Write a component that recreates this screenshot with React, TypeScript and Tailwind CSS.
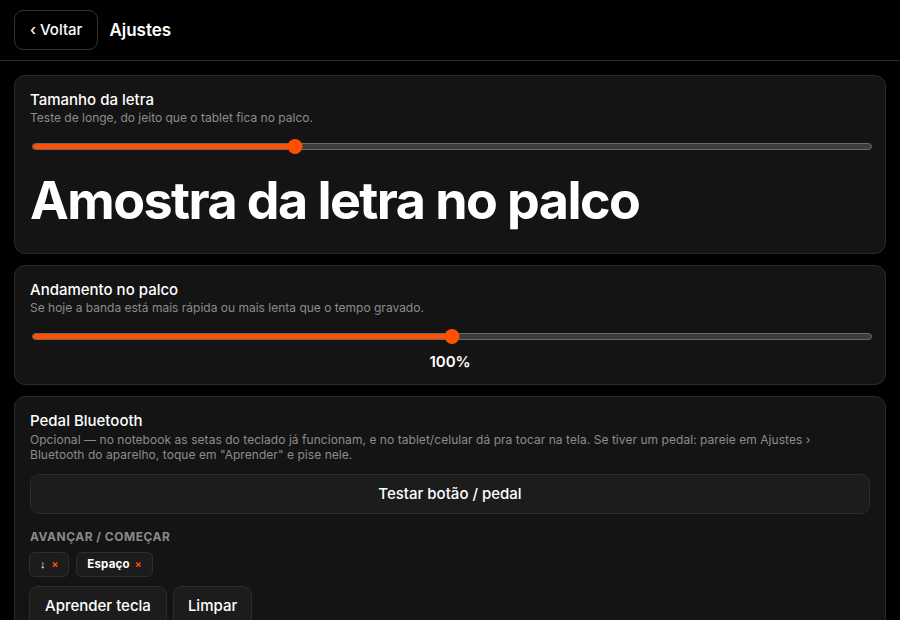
import React from "react";

function Slider({ pct }: { pct: number }) {
  return (
    <div className="relative h-[16px] ml-[2px] mr-[-2px] flex items-center">
      <div className="w-full h-[7px] rounded-full bg-[#3d3d3d] border border-[#6a6a6a] overflow-hidden">
        <div className="h-full bg-[#ff4f00]" style={{ width: `${pct}%` }} />
      </div>
      <div
        className="absolute top-[1px] w-[15px] h-[15px] rounded-full bg-[#ff4f00] -translate-x-1/2"
        style={{ left: `${pct}%` }}
      />
    </div>
  );
}

export default function App() {
  return (
    <div
      className="w-[900px] h-[620px] overflow-hidden bg-black text-white"
      style={{ fontFamily: "Inter, 'Noto Sans', sans-serif" }}
    >
      <header className="h-[61px] border-b border-[#2e2e2e] flex items-center px-[14px] gap-[11px]">
        <button className="h-[40px] px-[15px] rounded-[9px] border border-[#333] text-[15px] font-medium pt-[1px]">
          ‹ Voltar
        </button>
        <h1 className="text-[17px] font-semibold pt-[2px]">Ajustes</h1>
      </header>
      <main className="px-[14px] pt-[14px] flex flex-col gap-[11px]">
        <section className="rounded-[11px] bg-[#141414] border border-[#2a2a2a] px-[15px] pt-[14px] pb-[21px]">
          <h2 className="text-[15px] font-medium leading-[20px]">Tamanho da letra</h2>
          <p className="text-[12px] text-[#8c8c8c] leading-[16px]">Teste de longe, do jeito que o tablet fica no palco.</p>
          <div className="mt-[12px]">
            <Slider pct={31.3} />
          </div>
          <div className="text-[52px] font-bold leading-[62px] mt-[16px] tracking-[-0.03em]">Amostra da letra no palco</div>
        </section>
        <section className="rounded-[11px] bg-[#141414] border border-[#2a2a2a] px-[15px] pt-[14px] pb-[12px]">
          <h2 className="text-[15px] font-medium leading-[20px]">Andamento no palco</h2>
          <p className="text-[12px] text-[#8c8c8c] leading-[16px]">Se hoje a banda está mais rápida ou mais lenta que o tempo gravado.</p>
          <div className="mt-[12px]">
            <Slider pct={50} />
          </div>
          <div className="text-center text-[15px] font-semibold mt-[8px] leading-[20px]">100%</div>
        </section>
        <section className="rounded-[11px] bg-[#141414] border border-[#2a2a2a] px-[15px] pt-[14px] pb-[20px]">
          <h2 className="text-[15px] font-medium leading-[20px]">Pedal Bluetooth</h2>
          <p className="text-[12px] text-[#8c8c8c] leading-[15px] mt-[1px] max-w-[800px] tracking-[0.05px]">
            Opcional — no notebook as setas do teclado já funcionam, e no tablet/celular dá pra tocar na tela. Se tiver um pedal: pareie em Ajustes › Bluetooth do aparelho, toque em "Aprender" e pise nele.
          </p>
          <button className="mt-[12px] w-full h-[40px] rounded-[9px] bg-[#1c1c1c] border border-[#2c2c2c] text-[15px] font-medium">
            Testar botão / pedal
          </button>
          <div className="mt-[15px] text-[12px] font-bold text-[#8a8a8a] tracking-[0.5px] leading-[16px]">AVANÇAR / COMEÇAR</div>
          <div className="mt-[7px] flex gap-[7px] -ml-[1px]">
            <span className="h-[25px] pl-[10px] pr-[10px] rounded-[6px] bg-[#1c1c1c] border border-[#2e2e2e] text-[11px] font-bold flex items-center gap-[6px]">
              <span style={{ fontFamily: "'Liberation Sans', sans-serif" }} className="font-normal text-[11px]">↓</span>
              <span className="text-[#ff4f00] text-[10px]">×</span>
            </span>
            <span className="h-[25px] pl-[10px] pr-[10px] rounded-[6px] bg-[#1c1c1c] border border-[#2e2e2e] text-[11.5px] font-bold flex items-center gap-[5px] tracking-[0.2px]">
              Espaço <span className="text-[#ff4f00] text-[10px]">×</span>
            </span>
          </div>
          <div className="mt-[9px] flex gap-[6px] -ml-[1px]">
            <button className="h-[40px] px-[15px] rounded-[9px] bg-[#1c1c1c] border border-[#2c2c2c] text-[15px] font-medium">Aprender tecla</button>
            <button className="h-[40px] px-[14px] rounded-[9px] bg-[#1c1c1c] border border-[#2c2c2c] text-[15px] font-medium">Limpar</button>
          </div>
        </section>
      </main>
    </div>
  );
}
